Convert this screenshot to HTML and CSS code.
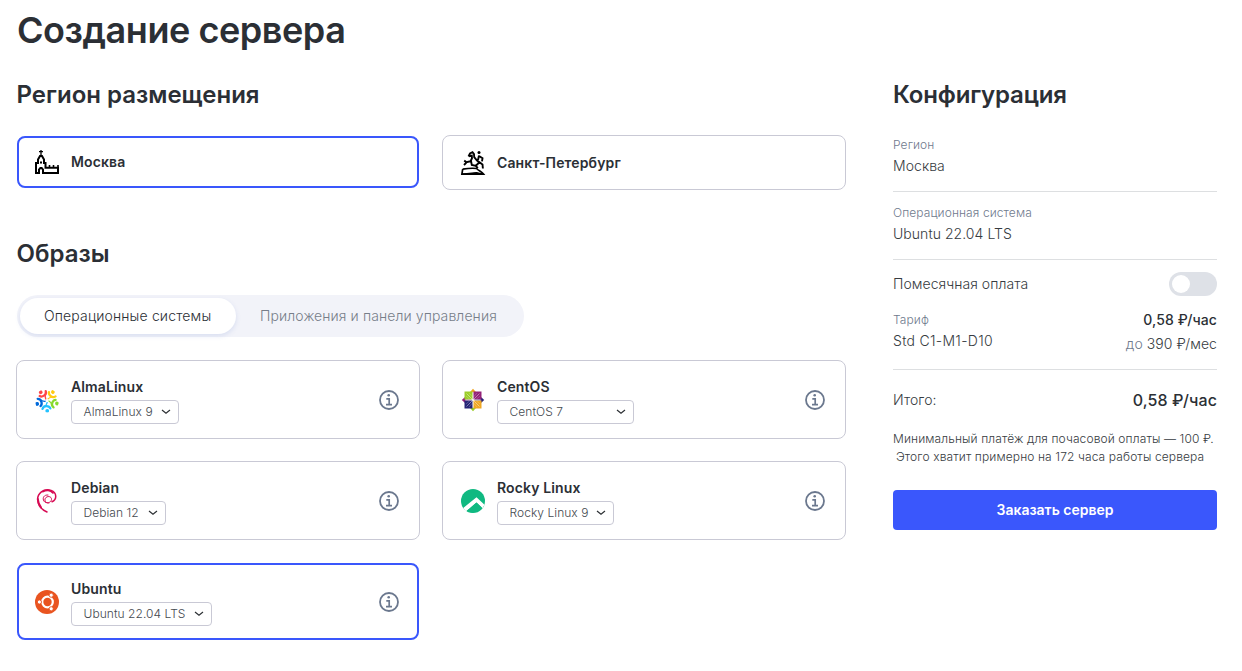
FILE: index.html
```html
<!DOCTYPE html>
<html lang="ru">
<head>
<meta charset="utf-8">
<title>Создание сервера</title>
<link rel="stylesheet" href="styles.css">
</head>
<body>
<svg class="defs" width="0" height="0">
  <symbol id="info" viewBox="0 0 20 20"><circle cx="10" cy="10" r="9" fill="none" stroke="#6b788e" stroke-width="1.8"/><circle cx="9.7" cy="5.3" r="1.3" fill="#6b788e"/><path d="M7.3 8.8h2.9v5.3M7 14.6h6" fill="none" stroke="#6b788e" stroke-width="1.7"/></symbol>
  <symbol id="chevron" viewBox="0 0 10 6"><path d="M1 1l4 3.2L9 1" fill="none" stroke="#2b2f33" stroke-width="1.2"/></symbol>
  <symbol id="alma-figure" viewBox="-12 -12 24 24"><circle cx="-.6" cy="-10.4" r="1.9" fill="currentColor"/><path d="M-3.600-7.800C-2.500-5.300 3-4.500 4.200-8.500" fill="none" stroke="currentColor" stroke-width="2.300" stroke-linecap="round"/><path d="M3.300-6.500Q0-4.800-.3-1.500" fill="none" stroke="currentColor" stroke-width="1.200"/></symbol>
</svg>
<div class="page">
  <h1 class="title">Создание сервера</h1>
  <div class="columns">
    <main class="main">
      <h2 class="heading">Регион размещения</h2>
      <div class="regions">
        <div class="region region-selected">
          <svg class="icon" viewBox="0 0 24 24" fill="none" stroke="#000" stroke-width="2"><path d="M6 0v6M4 1.7h4" stroke-width="1.3"/><path d="M1 23V13h2V9.5L5 6h2l2 3.5V13h1.5v4.7H23V23"/><path d="M0 23h4v-3.5L5.3 18h1.4L8 19.500V23h16"/><path d="M14.500 17v-2M18.500 17v-2M23 18v-3" stroke-width="1.600"/><path d="M6 11.500v2"/></svg>
          <span class="name">Москва</span>
        </div>
        <div class="region">
          <svg class="icon" viewBox="0 0 24 24" fill="none" stroke="#000"><path d="M1.700 18.200L.9 23.100H22.500c-2-2.400-4.500-3.200-7-5.600-4-.6-8-.3-13.800.7" stroke-width="1.700"/><path d="M1 23.200l14.500-1.700 6.500 1.600z" fill="#000" stroke-width="1.200"/><path d="M7.500 5.500L9 2.500l2.500-1.300 1.500 2 .2 3L16 9.500l2.500 2M8 5.200l2.800-.6.2 2.600-1.400 3-4 1-2.400-1.600M5.600 11.300L3 14M10 10l.8 4 4 .8 2 2.400M14.500 15l4-3.800 3 2.300.4 4M18 4.500L17 9M18 5l3.500 2.300-.5 3" stroke-width="1.900"/><circle cx="18" cy="1.600" r="1.500" fill="#000" stroke="none"/></svg>
          <span class="name">Санкт-Петербург</span>
        </div>
      </div>
      <h2 class="heading">Образы</h2>
      <div class="tabs">
        <div class="tab tab-active">Операционные системы</div>
        <div class="tab">Приложения и панели управления</div>
      </div>
      <div class="images">
        <div class="image">
          <svg class="icon" viewBox="-12 -12.500 24 24"><g transform="rotate(-34)" color="#ff4649"><use href="#alma-figure" x="-12" y="-12" width="24" height="24"/></g><g transform="rotate(38)" color="#ffcb12"><use href="#alma-figure" x="-12" y="-12" width="24" height="24"/></g><g transform="rotate(110)" color="#86da2f"><use href="#alma-figure" x="-12" y="-12" width="24" height="24"/></g><g transform="rotate(182)" color="#24c2ff"><use href="#alma-figure" x="-12" y="-12" width="24" height="24"/></g><g transform="rotate(254)" color="#0069da"><use href="#alma-figure" x="-12" y="-12" width="24" height="24"/></g></svg>
          <div class="body"><span class="name">AlmaLinux</span><div class="select select-alma"><span>AlmaLinux 9</span><svg class="chevron"><use href="#chevron"/></svg></div></div>
          <svg class="info"><use href="#info"/></svg>
        </div>
        <div class="image">
          <svg class="icon" viewBox="0 0 24 24"><path d="M12 .8l3.200 3.500H8.800z" fill="#efa724"/><path d="M23.200 12l-3.500 3.200V8.800z" fill="#262577"/><path d="M12 23.200l-3.200-3.500h6.400z" fill="#9ccd2a"/><path d="M.8 12l3.500-3.200v6.400z" fill="#932279"/><path d="M3.500 3.500h8v8h-8z" fill="#9ccd2a"/><path d="M12.500 3.500h8v8h-8z" fill="#932279"/><path d="M3.500 12.500h8v8h-8z" fill="#262577"/><path d="M12.500 12.500h8v8h-8z" fill="#efa724"/><path d="M5.500 5.500l13 13M18.500 5.500l-13 13" stroke="#fff" stroke-width=".6" stroke-opacity=".7"/><path d="M8 5l4 4.500L16 5M19 8l-4.500 4 4.500 4M16 19l-4-4.500L8 19M5 16l4.500-4L5 8" stroke="#fff" stroke-width=".4" stroke-opacity=".5" fill="none"/><path d="M4 12h6" stroke="#932279" stroke-opacity=".4"/><path d="M14 12h6" stroke="#262577" stroke-opacity=".4"/></svg>
          <div class="body"><span class="name">CentOS</span><div class="select select-centos"><span>CentOS 7</span><svg class="chevron"><use href="#chevron"/></svg></div></div>
          <svg class="info"><use href="#info"/></svg>
        </div>
        <div class="image">
          <svg class="icon" viewBox="0 0 24 24" fill="none" stroke="#d70a53" stroke-linecap="round"><path d="M14 14c-3 .6-5-2.500-3.600-4.800C12 6.600 16.800 7.100 16.500 10.500c-.3 3.400-5.600 4.400-7.500 1.700C7 9 9 5.500 13 6" stroke-width="1"/><path d="M17 12.800c5.200-2.500 5-9.300-.9-11.400C8.500-.9 2.200 4.500 2.700 11c.4 5.800 4.300 9.800 9.300 12" stroke-width="1.500"/><path d="M2.800 10c.3 3.500 1.700 6.500 3.200 8.400" stroke-width="2"/><path d="M8 2.500C11 .8 15.500.8 18 3.800" stroke-width="1.900"/></svg>
          <div class="body"><span class="name">Debian</span><div class="select select-debian"><span>Debian 12</span><svg class="chevron"><use href="#chevron"/></svg></div></div>
          <svg class="info"><use href="#info"/></svg>
        </div>
        <div class="image">
          <svg class="icon" viewBox="0 0 24 24"><circle cx="12" cy="12" r="12" fill="#10b981"/><path d="M2.200 19L15.500 8.300l8 7.500-2 3.400-6-5.700L5 22.500z" fill="#fff"/><path d="M5.500 22.100l10-8.600 5.200 4.900A12 12 0 0 1 5.500 22.100z" fill="#10b981"/></svg>
          <div class="body"><span class="name">Rocky Linux</span><div class="select select-rocky"><span>Rocky Linux 9</span><svg class="chevron"><use href="#chevron"/></svg></div></div>
          <svg class="info"><use href="#info"/></svg>
        </div>
        <div class="image image-selected">
          <svg class="icon" viewBox="0 0 24 24"><circle cx="12" cy="12" r="12" fill="#e95420"/><circle cx="12.500" cy="12" r="5.300" fill="none" stroke="#fff" stroke-width="2.200"/><g fill="#fff" stroke="#e95420" stroke-width=".9"><circle cx="4.400" cy="12" r="2.100"/><circle cx="16.200" cy="5.200" r="2.100"/><circle cx="16.200" cy="18.800" r="2.100"/></g></svg>
          <div class="body"><span class="name">Ubuntu</span><div class="select select-ubuntu"><span>Ubuntu 22.04 LTS</span><svg class="chevron"><use href="#chevron"/></svg></div></div>
          <svg class="info"><use href="#info"/></svg>
        </div>
      </div>
    </main>
    <aside class="summary">
      <h2 class="heading heading-summary">Конфигурация</h2>
      <section class="field field-first"><div class="label">Регион</div><div class="value">Москва</div></section>
      <section class="field"><div class="label">Операционная система</div><div class="value">Ubuntu 22.04 LTS</div></section>
      <section class="plan">
        <div class="row"><span class="value">Помесячная оплата</span><span class="toggle"><span class="knob"></span></span></div>
        <div class="tariff">
          <div><div class="label">Тариф</div><div class="value tariff-name">Std C1-M1-D10</div></div>
          <div class="prices"><div class="price">0,58 ₽/час</div><div class="value"><span class="muted">до</span> 390 ₽/мес</div></div>
        </div>
      </section>
      <div class="row total"><span class="value">Итого:</span><span class="sum">0,58 ₽/час</span></div>
      <p class="note">Минимальный платёж для почасовой оплаты — 100 ₽.<br><span class="note-second">Этого хватит примерно на 172 часа работы сервера</span></p>
      <button class="order">Заказать сервер</button>
    </aside>
  </div>
</div>
</body>
</html>
```
FILE: styles.css
```css
* { box-sizing: border-box; }
body { margin: 0; background: #fff; color: #2b2f35; font-family: Inter, "Liberation Sans", sans-serif; font-size: 14px; font-weight: 350; white-space: nowrap; }
.defs { display: block; height: 0; }
.page { width: 1242px; height: 671px; padding: 8px 25px 0 16px; overflow: hidden; }
.title { margin: 0; padding-left: 1px; font-size: 36px; line-height: 44px; font-weight: 600; letter-spacing: -.45px; }
.columns { display: flex; justify-content: space-between; padding-top: 27px; }
.main { width: 830px; }
.summary { width: 324px; }
.heading { margin: 0; padding-left: .5px; font-size: 24px; line-height: 32px; font-weight: 570; }
.heading-summary { padding-left: 0; letter-spacing: -.18px; }
.regions { display: grid; grid-template-columns: 404px 404px; gap: 22px; align-items: start; margin: 24px 0 48px; }
.region { display: flex; align-items: center; height: 55px; padding: 0 18px; gap: 12px; border: 1px solid #c9c9d5; border-radius: 8px; }
.region-selected { height: 52px; margin: 1px 1px 0; padding: 0 16px; border: 2px solid #3a57fc; }
.icon { flex: none; width: 24px; height: 24px; overflow: visible; }
.name { font-size: 14px; line-height: 20px; font-weight: 560; letter-spacing: .13px; }
.tabs { display: flex; width: 507px; height: 42px; margin: 25px 0 23px 1px; padding: 3px; border-radius: 21px; background: #f2f3f9; }
.tab { padding: 0 24px; line-height: 36px; letter-spacing: .1px; color: #777e89; }
.tab-active { width: 216px; border-radius: 18px; background: #fff; color: #2b2f35; letter-spacing: .15px; box-shadow: 0 2px 5px rgba(80, 110, 200, .16); }
.images { display: grid; grid-template-columns: 404px 404px; gap: 22px; }
.image { display: flex; align-items: center; height: 79px; padding: 0 20px 0 18px; gap: 12px; border: 1px solid #c9c9d5; border-radius: 8px; }
.image-selected { height: 77px; margin: 1px; padding: 0 18px 0 16px; border: 2px solid #3a57fc; }
.body { display: flex; flex-direction: column; align-items: flex-start; gap: 3px; flex: 1; padding-top: 2px; }
.info { width: 20px; height: 20px; }
.select { display: flex; align-items: center; justify-content: space-between; height: 24px; padding: 0 7px 0 11.5px; border: 1px solid #c9c9d5; border-radius: 4px; font-size: 12px; line-height: 20px; letter-spacing: .05px; color: #44494f; }
.select span { padding-bottom: 1px; }
.chevron { width: 10px; height: 6px; }
.select-alma { width: 108px; }
.select-centos { width: 137px; }
.select-debian { width: 95px; }
.select-rocky { width: 117px; }
.select-ubuntu { width: 141px; }
.field { height: 68px; padding-top: 12px; border-bottom: 1px solid #dddfe1; }
.field-first { padding-top: 13px; height: 69px; margin-top: 12px; }
.label { font-size: 12px; line-height: 18px; letter-spacing: .1px; color: #6f7a8d; }
.value { line-height: 24px; color: #363b41; letter-spacing: .05px; }
.tariff-name { letter-spacing: .3px; }
.plan { height: 110px; padding-top: 12px; border-bottom: 1px solid #dddfe1; }
.row { display: flex; justify-content: space-between; align-items: center; height: 24px; }
.toggle { width: 48px; height: 24px; padding: 3px; border-radius: 12px; background: #dee1e7; }
.knob { display: block; width: 18px; height: 18px; border-radius: 50%; background: #fff; }
.tariff { display: flex; justify-content: space-between; padding-top: 15px; }
.prices { text-align: right; margin-top: -3px; }
.price { font-weight: 550; line-height: 24px; letter-spacing: .1px; }
.muted { color: #6f7a8d; }
.total { margin-top: 18px; }
.sum { font-size: 16px; font-weight: 550; letter-spacing: .1px; }
.note { margin: 18px 0 24px; font-size: 12px; line-height: 18px; letter-spacing: .12px; color: #363b41; }
.note-second { padding-left: 3px; }
.order { display: block; width: 324px; height: 40px; padding: 0 0 1px; border: 0; border-radius: 4px; background: #3a57fc; color: #fff; font: 600 14px Inter, sans-serif; }
```
